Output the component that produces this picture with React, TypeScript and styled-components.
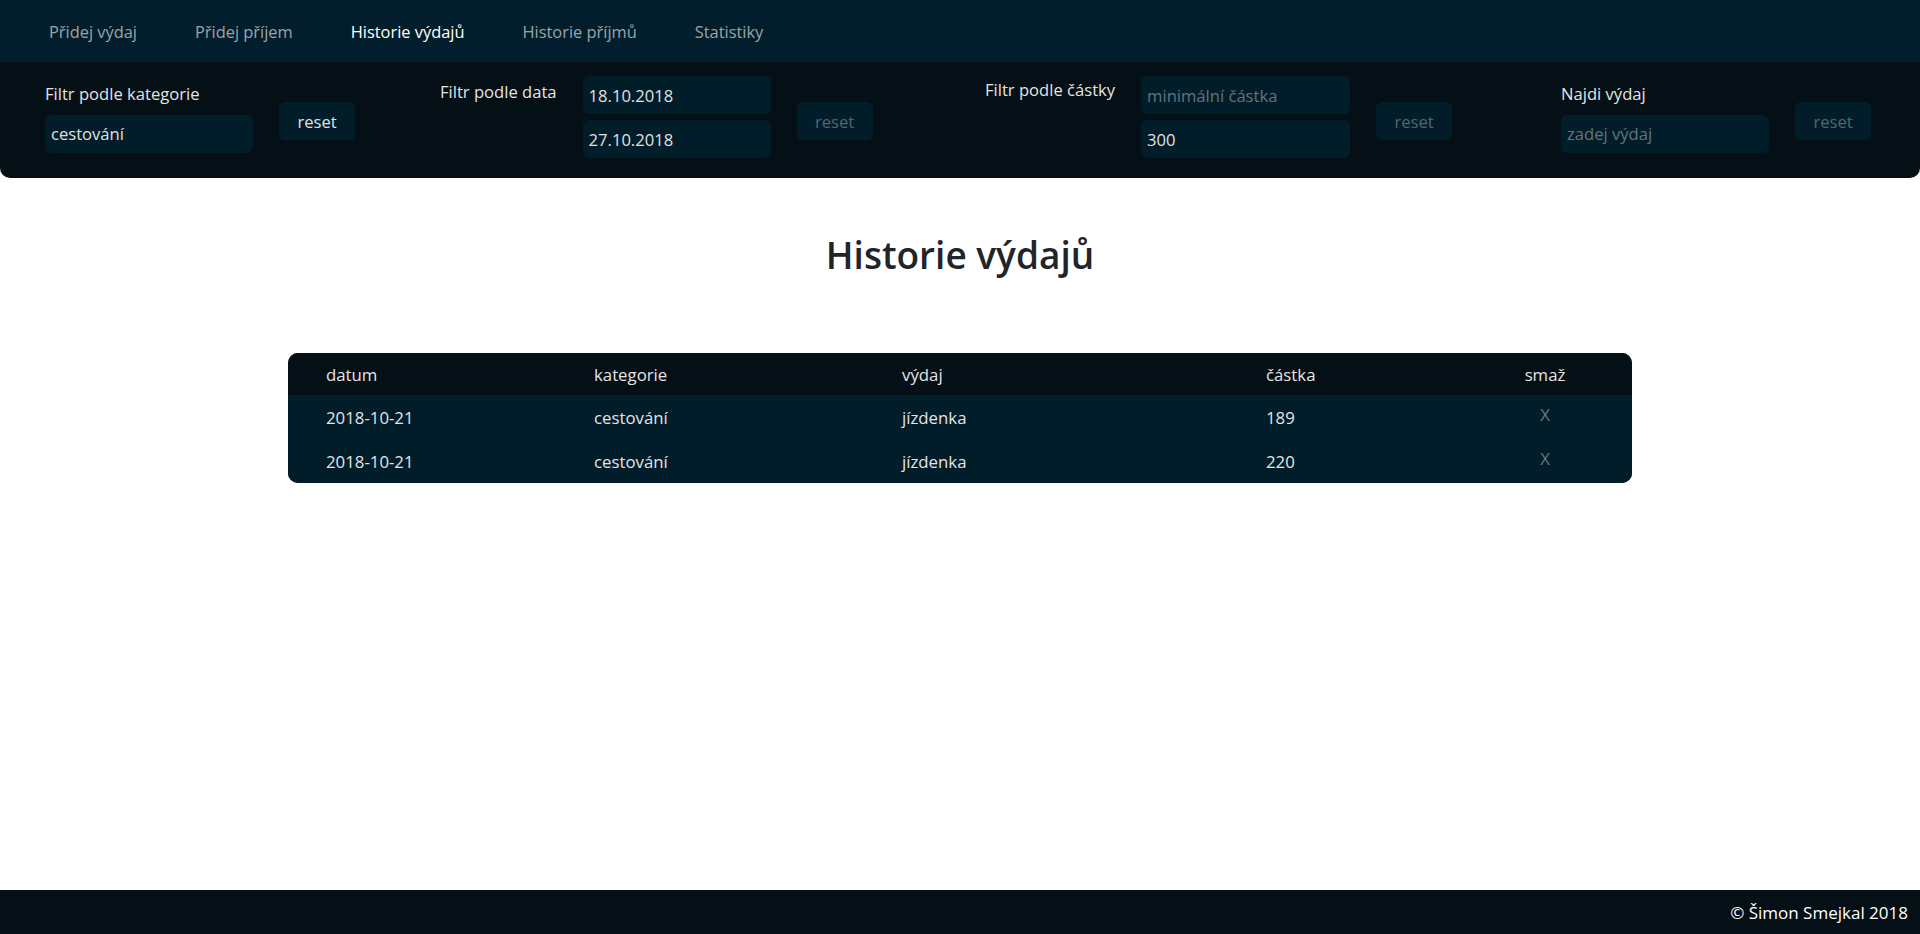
import React from 'react';
import styled, { createGlobalStyle } from 'styled-components';

const GlobalStyle = createGlobalStyle`
  html, body {
    margin: 0;
    padding: 0;
    background: #fff;
    font-family: "Open Sans", "Noto Sans", sans-serif;
  }
  * {
    box-sizing: border-box;
  }
`;

const Page = styled.div`
  min-height: 100vh;
  display: flex;
  flex-direction: column;
`;

const Nav = styled.nav`
  height: 62px;
  background-color: #021d2b;
  display: flex;
  align-items: center;
  padding-left: 20px;
`;

const NavItem = styled.a<{ $active?: boolean }>`
  padding: 0 29px;
  font-size: 16.4px;
  color: ${(p) => (p.$active ? '#ffffff' : 'rgba(255, 255, 255, 0.6)')};
  text-decoration: none;
  cursor: pointer;
`;

const FilterPanel = styled.div`
  background-color: #050f16;
  border-radius: 0 0 10px 10px;
  padding: 14px 0 20px 45px;
  display: grid;
  grid-template-columns: 395px 545px 576px 1fr;
  align-items: center;
`;

const FilterGroup = styled.div`
  display: flex;
  align-items: center;
  gap: 26px;
`;

const Column = styled.div`
  display: flex;
  flex-direction: column;
`;

const Label = styled.label<{ $top?: number }>`
  color: #e4e4e4;
  font-size: 16.6px;
  line-height: 24px;
  margin-bottom: ${(p) => (p.$top !== undefined ? '0' : '9px')};
  align-self: ${(p) => (p.$top !== undefined ? 'flex-start' : 'auto')};
  margin-top: ${(p) => (p.$top !== undefined ? `${p.$top}px` : '0')};
  white-space: nowrap;
`;

const Stack = styled.div`
  display: flex;
  flex-direction: column;
  gap: 6px;
`;

const Input = styled.input<{ $width: number }>`
  width: ${(p) => p.$width}px;
  height: 38px;
  background-color: #011d2a;
  border: none;
  border-radius: 6px;
  padding: 0 6px;
  color: #e0e0e0;
  font-family: inherit;
  font-size: 16.6px;
  outline: none;

  &::placeholder {
    color: #66737a;
  }
`;

const ResetButton = styled.button<{ $disabled?: boolean }>`
  width: 76px;
  height: 38px;
  margin-top: 8px;
  background-color: #011d2a;
  border: none;
  border-radius: 6px;
  color: ${(p) => (p.$disabled ? '#56646c' : '#e0e0e0')};
  font-family: inherit;
  font-size: 16.6px;
  cursor: pointer;
`;

const Main = styled.main`
  display: flex;
  flex-direction: column;
  align-items: center;
  padding-top: 53px;
`;

const Title = styled.h1`
  margin: 0;
  font-size: 37px;
  line-height: 48px;
  font-weight: 600;
  color: #212529;
`;

const Table = styled.div`
  width: 70%;
  margin-top: 74px;
  border-radius: 10px;
  overflow: hidden;
  background-color: #011d2a;
`;

const Row = styled.div<{ $head?: boolean }>`
  display: grid;
  grid-template-columns: 268px 308px 364px 224px 110px;
  align-items: center;
  height: ${(p) => (p.$head ? '42px' : '44px')};
  padding: 0 32px 0 38px;
  background-color: ${(p) => (p.$head ? '#050f16' : '#011d2a')};
  color: #e4e4e4;
  font-size: 16.8px;
`;

const Cell = styled.div<{ $center?: boolean }>`
  text-align: ${(p) => (p.$center ? 'center' : 'left')};
`;

const Delete = styled.span`
  color: #67767d;
  cursor: pointer;
  position: relative;
  top: -3px;
`;

const Footer = styled.footer`
  margin-top: auto;
  height: 44px;
  background-color: #050f16;
  color: #ffffff;
  font-size: 17px;
  display: flex;
  align-items: center;
  justify-content: flex-end;
  padding-right: 12px;
`;

const navItems = ['Přidej výdaj', 'Přidej příjem', 'Historie výdajů', 'Historie příjmů', 'Statistiky'];

const expenses = [
  { date: '2018-10-21', category: 'cestování', name: 'jízdenka', amount: 189 },
  { date: '2018-10-21', category: 'cestování', name: 'jízdenka', amount: 220 },
];

const App: React.FC = () => {
  return (
    <Page>
      <GlobalStyle />
      <Nav>
        {navItems.map((item) => (
          <NavItem key={item} $active={item === 'Historie výdajů'}>
            {item}
          </NavItem>
        ))}
      </Nav>

      <FilterPanel>
        <FilterGroup>
          <Column>
            <Label>Filtr podle kategorie</Label>
            <Input $width={208} defaultValue="cestování" />
          </Column>
          <ResetButton>reset</ResetButton>
        </FilterGroup>

        <FilterGroup>
          <Label $top={4}>Filtr podle data</Label>
          <Stack>
            <Input $width={188} defaultValue="18.10.2018" />
            <Input $width={188} defaultValue="27.10.2018" />
          </Stack>
          <ResetButton $disabled>reset</ResetButton>
        </FilterGroup>

        <FilterGroup>
          <Label $top={2}>Filtr podle částky</Label>
          <Stack>
            <Input $width={209} placeholder="minimální částka" />
            <Input $width={209} defaultValue="300" />
          </Stack>
          <ResetButton $disabled>reset</ResetButton>
        </FilterGroup>

        <FilterGroup>
          <Column>
            <Label>Najdi výdaj</Label>
            <Input $width={208} placeholder="zadej výdaj" />
          </Column>
          <ResetButton $disabled>reset</ResetButton>
        </FilterGroup>
      </FilterPanel>

      <Main>
        <Title>Historie výdajů</Title>
        <Table>
          <Row $head>
            <Cell>datum</Cell>
            <Cell>kategorie</Cell>
            <Cell>výdaj</Cell>
            <Cell>částka</Cell>
            <Cell $center>smaž</Cell>
          </Row>
          {expenses.map((e, i) => (
            <Row key={i}>
              <Cell>{e.date}</Cell>
              <Cell>{e.category}</Cell>
              <Cell>{e.name}</Cell>
              <Cell>{e.amount}</Cell>
              <Cell $center>
                <Delete>X</Delete>
              </Cell>
            </Row>
          ))}
        </Table>
      </Main>

      <Footer>© Šimon Smejkal 2018</Footer>
    </Page>
  );
};

export default App;
